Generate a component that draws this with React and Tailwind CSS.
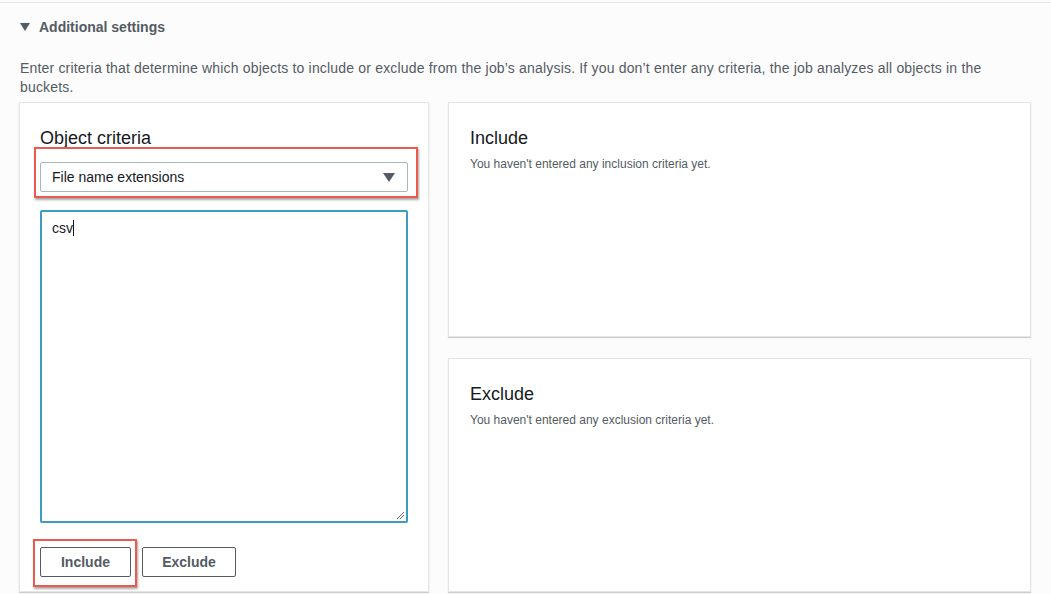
export default function App() {
  return (
    <div className="w-[1051px] h-[594px] bg-[#fcfcfc] overflow-hidden font-['Liberation_Sans',Arial,sans-serif] text-[#545b64]">
      <div className="mt-[2px] border-t border-[#e6e6e6] px-[20px]">
        {/* Header */}
        <div className="flex items-center gap-[9px] h-[46px] pt-[2px]">
          <svg width="10" height="8" viewBox="0 0 10 8">
            <polygon points="0,0 10,0 5,8" fill="#545b64" />
          </svg>
          <span className="text-[14px] font-bold text-[#545b64]">Additional settings</span>
        </div>
        <p className="mt-[10px] text-[14px] leading-[19px] pr-[40px] tracking-[0.18px]">
          Enter criteria that determine which objects to include or exclude from the job’s analysis. If you don’t enter any criteria, the job analyzes all objects in the buckets.
        </p>

        <div className="mt-[5px] flex gap-[19px] -ml-px">
          {/* Left panel */}
          <div className="relative w-[411px] h-[490px] bg-white border border-[#e4e6e6] shadow-[0_1px_1px_rgba(0,0,0,0.18)] px-[20px] pt-[24px]">
            <h2 className="text-[18px] leading-[22px] text-[#16191f]">Object criteria</h2>
            <div className="mt-[13px] h-[30px] border border-[#aab7b8] rounded-[2px] flex items-center justify-between pl-[11px] pr-[12px] bg-white">
              <span className="text-[14px] text-[#16191f]">File name extensions</span>
              <svg width="12" height="9" viewBox="0 0 12 9">
                <polygon points="0,0 12,0 6,9" fill="#545b64" />
              </svg>
            </div>
            <div className="mt-[18px] h-[313px] border-2 border-[#3d9dc0] rounded-[2px] bg-white px-[10px] pt-[4px] relative">
              <span className="text-[14px] text-[#16191f]">csv</span>
              <span className="inline-block w-px h-[16px] bg-[#16191f] align-middle -mt-[2px]" />
              <svg className="absolute right-[1px] bottom-[1px]" width="9" height="9" viewBox="0 0 9 9">
                <line x1="1" y1="8" x2="8" y2="1" stroke="#666" strokeWidth="1" />
                <line x1="4" y1="8" x2="8" y2="4" stroke="#666" strokeWidth="1" />
              </svg>
            </div>
            <div className="mt-[24px] flex gap-[11px]">
              <button className="w-[91px] h-[30px] border border-[#545b64] rounded-[2px] text-[14px] font-bold text-[#545b64] bg-white">Include</button>
              <button className="w-[94px] h-[30px] border border-[#545b64] rounded-[2px] text-[14px] font-bold text-[#545b64] bg-white">Exclude</button>
            </div>

            {/* annotation boxes */}
            <div className="absolute left-[14px] top-[44px] w-[384px] h-[51px] border-2 border-[#ea5b4d] shadow-[1px_2px_2px_rgba(0,0,0,0.35)]" />
            <div className="absolute left-[13px] top-[436px] w-[104px] h-[48px] border-2 border-[#ea5b4d] shadow-[1px_2px_2px_rgba(0,0,0,0.35)]" />
          </div>

          {/* Right panels */}
          <div className="flex flex-col gap-[21px]">
            <div className="w-[583px] h-[235px] bg-white border border-[#e4e6e6] shadow-[0_1px_1px_rgba(0,0,0,0.18)] px-[21px] pt-[24px]">
              <h2 className="text-[18px] leading-[22px] text-[#16191f]">Include</h2>
              <p className="mt-[6px] text-[12px] text-[#545b64]">You haven't entered any inclusion criteria yet.</p>
            </div>
            <div className="w-[583px] h-[234px] bg-white border border-[#e4e6e6] shadow-[0_1px_1px_rgba(0,0,0,0.18)] px-[21px] pt-[24px]">
              <h2 className="text-[18px] leading-[22px] text-[#16191f]">Exclude</h2>
              <p className="mt-[6px] text-[12px] text-[#545b64]">You haven't entered any exclusion criteria yet.</p>
            </div>
          </div>
        </div>
      </div>
    </div>
  );
}
